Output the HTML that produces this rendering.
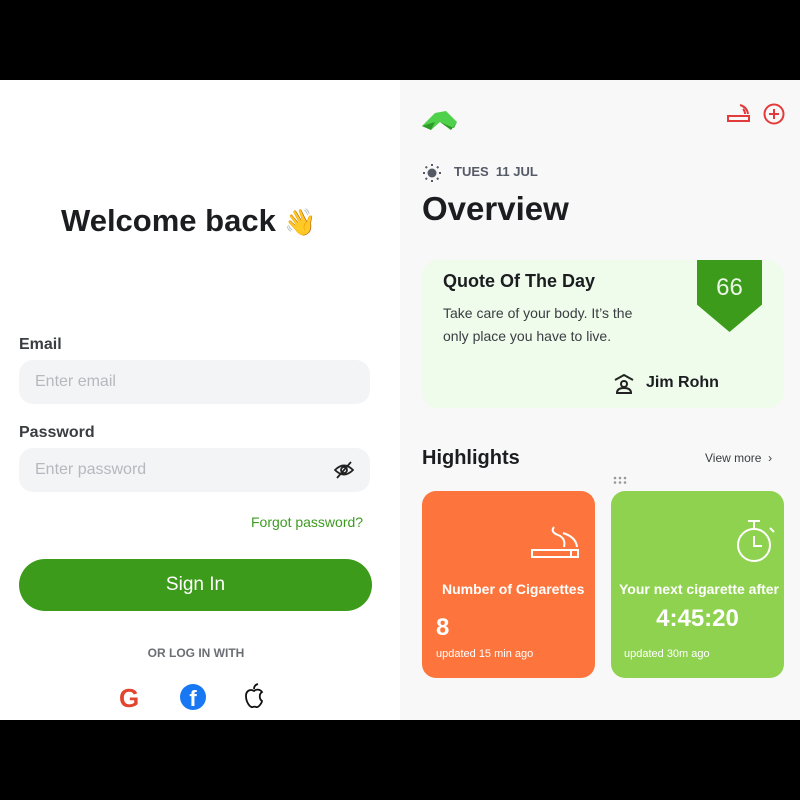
<!DOCTYPE html>
<html><head><meta charset="utf-8"><style>
*{margin:0;padding:0;box-sizing:border-box}
body{width:800px;height:800px;background:#000;position:relative;overflow:hidden;font-family:"Liberation Sans",sans-serif}
.a{position:absolute}
#L{left:0;top:80px;width:400px;height:640px;background:#fff}
#R{left:400px;top:80px;width:400px;height:640px;background:#f8f8f8}
.in{position:absolute;left:19px;width:351px;height:44px;background:#f3f4f6;border-radius:14px;color:#b5b8bd;font-size:16px;padding-left:16px;line-height:44px}
.lbl{position:absolute;left:19px;font-size:16px;font-weight:bold;color:#3a3d42}
.card{position:absolute;border-radius:14px;color:#fff;font-weight:bold}
</style></head><body>
<div id="L" class="a">
<div class="a" style="left:61px;top:123px;font-size:31px;font-weight:bold;color:#1b1d21">Welcome back <span style="font-size:26px">👋</span></div>
<div class="lbl" style="top:256px">Email</div>
<div class="in" style="top:280px">Enter email</div>
<div class="lbl" style="top:344px">Password</div>
<div class="in" style="top:368px">Enter password
<svg class="a" style="left:315px;top:13px" width="20" height="18" viewBox="0 0 20 18"><path d="M1 9Q10 0 19 9Q10 18 1 9Z" fill="none" stroke="#222" stroke-width="1.8"/><circle cx="10" cy="9" r="3" fill="none" stroke="#222" stroke-width="1.8"/><path d="M3 17L17 1" stroke="#222" stroke-width="1.8"/></svg></div>
<div class="a" style="left:251px;top:434px;font-size:14px;color:#3e9b22">Forgot password?</div>
<div class="a" style="left:19px;top:479px;width:353px;height:52px;border-radius:26px;background:#3d9b1c;color:#fff;font-size:19px;text-align:center;line-height:52px">Sign In</div>
<div class="a" style="left:0;width:392px;top:566px;text-align:center;font-size:12px;font-weight:bold;color:#6b6e74">OR LOG IN WITH</div>
<div class="a" style="left:119px;top:603px;font-size:26px;font-weight:bold;color:#e2442f">G</div>
<div class="a" style="left:180px;top:604px;width:26px;height:26px;border-radius:50%;background:#1877f2;color:#fff;font-weight:bold;font-size:22px;text-align:center;line-height:30px;overflow:hidden">f</div>
<svg class="a" style="left:242px;top:603px" width="24" height="26" viewBox="0 0 24 26"><path d="M12 8C9 6 4 7 4 13C4 19 8 25 11 24C12 23.5 13 23.5 14 24C17 25 20 19 20 18C17 16 17 11 20 9C18 6 14 6 12 8Z" fill="none" stroke="#111" stroke-width="1.8"/><path d="M12 6Q12 2 16 1" fill="none" stroke="#111" stroke-width="1.8"/></svg>
</div>
<div id="R" class="a">
<svg class="a" style="left:21px;top:28px" width="38" height="24" viewBox="0 0 38 24"><path d="M1 18L14 5L25 3L36 14L30 22L19 14L10 22Z" fill="#4fd14b"/><path d="M19 14L30 22L36 14L33 20Z" fill="#2f9a2a"/><path d="M1 18L10 22L14 14Z" fill="#2f9a2a"/></svg>
<svg class="a" style="left:327px;top:23px" width="24" height="20" viewBox="0 0 24 20"><rect x="1" y="13" width="21" height="5" fill="none" stroke="#e23b3b" stroke-width="2"/><path d="M13 2Q20 4 21 11M16 6Q18 8 18 11" fill="none" stroke="#e23b3b" stroke-width="2"/></svg>
<svg class="a" style="left:363px;top:23px" width="22" height="22" viewBox="0 0 22 22"><circle cx="11" cy="11" r="9.5" fill="none" stroke="#e23b3b" stroke-width="2"/><path d="M11 6V16M6 11H16" stroke="#e23b3b" stroke-width="2"/></svg>
<svg class="a" style="left:22px;top:83px" width="20" height="20" viewBox="0 0 20 20"><circle cx="10" cy="10" r="4.5" fill="#555a66"/><path d="M10 1V3M10 17V19M1 10H3M17 10H19M3.6 3.6L5 5M15 15L16.4 16.4M3.6 16.4L5 15M15 5L16.4 3.6" stroke="#555a66" stroke-width="2"/></svg>
<div class="a" style="left:54px;top:84px;font-size:13px;font-weight:bold;color:#555a66">TUES&nbsp; 11 JUL</div>
<div class="a" style="left:22px;top:110px;font-size:33px;font-weight:bold;color:#1b1d21">Overview</div>
<div class="a" style="left:22px;top:180px;width:362px;height:148px;border-radius:16px;background:#effbeb"></div>
<div class="a" style="left:297px;top:180px;width:65px;height:72px;background:#3d9b1c;clip-path:polygon(0 0,100% 0,100% 62%,50% 100%,0 62%)"></div>
<div class="a" style="left:297px;top:194px;width:65px;text-align:center;color:#eaf7e4;font-size:24px">66</div>
<div class="a" style="left:43px;top:191px;font-size:18px;font-weight:bold;color:#1b1d21">Quote Of The Day</div>
<div class="a" style="left:43px;top:222px;font-size:14px;color:#3a3d42;line-height:23px">Take care of your body. It’s the<br>only place you have to live.</div>
<svg class="a" style="left:213px;top:293px" width="22" height="22" viewBox="0 0 22 22"><path d="M2 7L11 2L20 7" fill="none" stroke="#222" stroke-width="2"/><circle cx="11" cy="11" r="3" fill="none" stroke="#222" stroke-width="2"/><path d="M4 20Q4 15 11 15Q18 15 18 20Z" fill="none" stroke="#222" stroke-width="2"/></svg>
<div class="a" style="left:246px;top:294px;font-size:16px;font-weight:bold;color:#1b1d21">Jim Rohn</div>
<div class="a" style="left:22px;top:367px;font-size:20px;font-weight:bold;color:#1b1d21">Highlights</div>
<div class="a" style="left:305px;top:371px;font-size:12px;color:#3a3d42">View more &nbsp;›</div>
<svg class="a" style="left:213px;top:396px" width="16" height="8" viewBox="0 0 16 8"><g fill="#999"><circle cx="2" cy="2" r="1.3"/><circle cx="7" cy="2" r="1.3"/><circle cx="12" cy="2" r="1.3"/><circle cx="2" cy="6.5" r="1.3"/><circle cx="7" cy="6.5" r="1.3"/><circle cx="12" cy="6.5" r="1.3"/></g></svg>
<div class="card" style="left:22px;top:411px;width:173px;height:187px;background:#fd753c">
<svg class="a" style="left:108px;top:34px" width="50" height="36" viewBox="0 0 50 36"><rect x="2" y="25" width="46" height="7" fill="none" stroke="#fff" stroke-width="2"/><path d="M41 25V32" stroke="#fff" stroke-width="2"/><path d="M24 2Q20 7 28 10Q36 13 34 22M33 8Q46 12 47 22" fill="none" stroke="#fff" stroke-width="2"/></svg>
<div class="a" style="left:20px;top:90px;font-size:14px">Number of Cigarettes</div>
<div class="a" style="left:14px;top:123px;font-size:24px">8</div>
<div class="a" style="left:14px;top:157px;font-size:11px;font-weight:normal">updated 15 min ago</div></div>
<div class="card" style="left:211px;top:411px;width:173px;height:187px;background:#8fd24f">
<svg class="a" style="left:124px;top:28px" width="42" height="46" viewBox="0 0 42 46"><circle cx="19" cy="26" r="16" fill="none" stroke="#fff" stroke-width="2"/><path d="M13 2H25M19 2V10M19 17V27H27M35 9L39 13" fill="none" stroke="#fff" stroke-width="2"/></svg>
<div class="a" style="left:8px;top:90px;font-size:14px">Your next cigarette after</div>
<div class="a" style="left:0;width:173px;text-align:center;top:114px;font-size:24px">4:45:20</div>
<div class="a" style="left:13px;top:157px;font-size:11px;font-weight:normal">updated 30m ago</div></div>
</div>
</body></html>
